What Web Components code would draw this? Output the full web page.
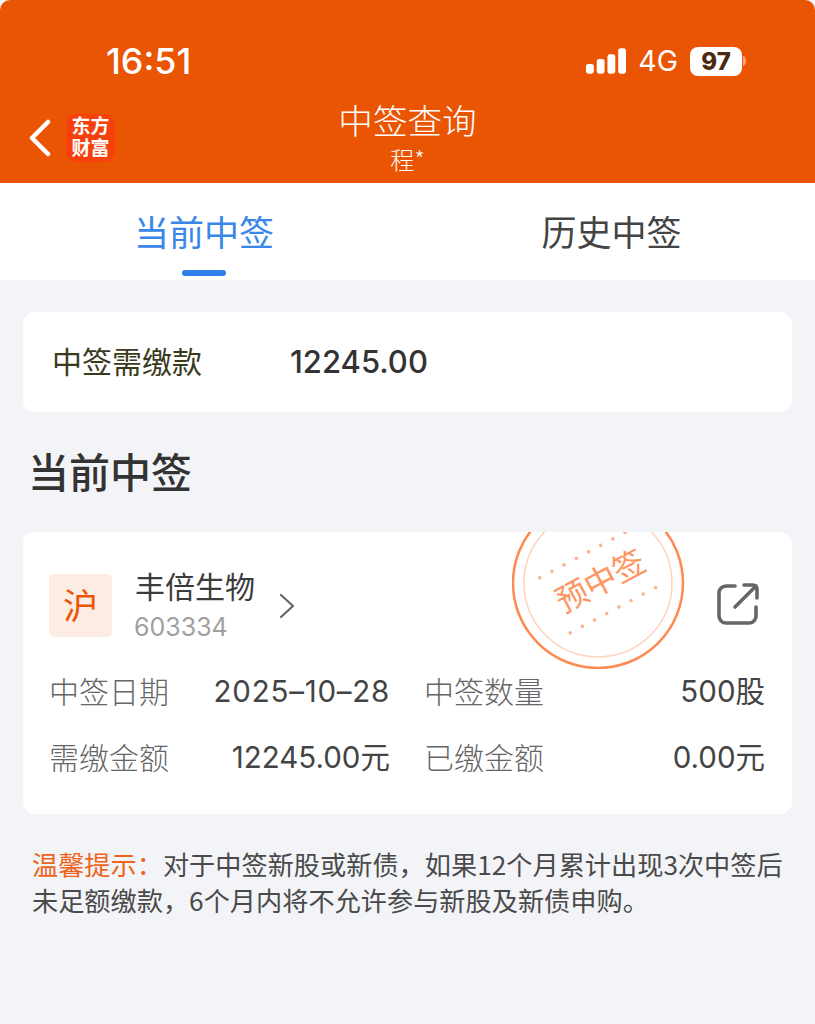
<!DOCTYPE html>
<html lang="zh"><head><meta charset="utf-8">
<style>
html,body{margin:0;padding:0;background:#f3f4f8;}
body{width:815px;height:1024px;overflow:hidden;font-family:"Noto Sans CJK SC","Liberation Sans",sans-serif;}
app-page{display:block;}
</style></head><body>
<app-page>
<app-header></app-header>
<app-tabs></app-tabs>
<div style="display:flex;flex-direction:column">
<pay-summary label="中签需缴款" value="12245.00"></pay-summary>
<section-title>当前中签</section-title>
<stock-card></stock-card>
<tip-note></tip-note>
</div>
</app-page>
<script>
const SANS='"Noto Sans CJK SC","Liberation Sans",sans-serif';
function def(name,html){customElements.define(name,class extends HTMLElement{constructor(){super();this.attachShadow({mode:'open'}).innerHTML=typeof html==='function'?html(this):html;}
connectedCallback(){if(typeof html==='function')this.shadowRoot.innerHTML=html(this);}});}
def('app-header',`<style>
:host{display:block;height:183px;background:#ea5504;color:#fff;position:relative;font-family:${SANS};box-sizing:border-box;border-radius:10px 10px 0 0;overflow:hidden;}
.wrap{display:flex;flex-direction:column;height:100%;background:#ea5504;}
.status{height:97px;display:flex;justify-content:space-between;align-items:flex-start;padding:41px 69px 0 106px;box-sizing:border-box;}
.time{font:500 35.8px/40px Inter,sans-serif;}
.right{display:flex;align-items:center;gap:12px;height:40px;}
.net{font:400 28.5px/30px Inter,sans-serif;}
.bat{display:flex;align-items:center;gap:1px}
.batb{width:52px;height:29px;background:#fff;border-radius:8px;font:800 24px/29px Inter,sans-serif;color:#4a2a10;text-align:center;}
.nav{position:relative;flex:1;display:flex;flex-direction:column;align-items:center;}
.t{font-size:34.6px;line-height:46px;font-weight:300;margin-top:-1px;}
.s{font-size:24px;line-height:30px;font-weight:300;margin-top:2px}
.back{position:absolute;left:29px;top:22px}
.logo{position:absolute;left:66px;top:17px;width:49px;height:48px;border-radius:11px;background:#f8400c;display:flex;align-items:center;justify-content:center;text-align:center;font-family:"Liberation Sans","Noto Sans CJK SC",sans-serif;font-size:19px;line-height:22.5px;font-weight:700;}
</style><div class="wrap"><div class="status"><span class="time">16:51</span>
<div class="right"><svg width="40" height="26" viewBox="0 0 41 26" fill="#fff"><rect x="0" y="16" width="8" height="10" rx="2.5"/><rect x="11" y="11" width="8" height="15" rx="2.5"/><rect x="22" y="6" width="8" height="20" rx="2.5"/><rect x="33" y="0" width="8" height="26" rx="2.5"/></svg>
<span class="net">4G</span><span class="bat"><span class="batb">97</span><svg width="3" height="10" viewBox="0 0 3 10"><path d="M0 0a3 5 0 0 1 0 10z" fill="#f5a67a"/></svg></span></div></div>
<div class="nav"><svg class="back" width="22" height="38" viewBox="0 0 22 38" fill="none" stroke="#fff" stroke-width="4.5" stroke-linecap="round" stroke-linejoin="round"><path d="M19 3 3 19l16 16" /></svg>
<div class="logo"><span>东方<br>财富</span></div>
<div class="t">中签查询</div><div class="s">程*</div></div></div>`);
def('app-tabs',`<style>
:host{display:block;height:97px;background:#fff;font-family:${SANS};}
.r{display:grid;grid-template-columns:408px 407px;height:100%;}
.tab{display:flex;flex-direction:column;align-items:center;font-size:35px;line-height:46px;padding-top:25px;box-sizing:border-box;color:#444;font-weight:400;}
.on{color:#3a87ea;}
.bar{width:44px;height:6px;border-radius:3px;background:#2f80e8;margin-top:16px}
</style><div class="r"><div class="tab on">当前中签<span class="bar"></span></div><div class="tab">历史中签</div></div>`);
def('pay-summary',el=>`<style>
:host{display:flex;align-items:center;margin:32px 23px 0 23px;height:100px;background:#fff;border-radius:12px;font-family:${SANS};padding-left:29px;box-sizing:border-box;}
.l{width:238px;font-size:30px;color:#3a3a1c;font-weight:400;margin-top:-4px;}
.v{font:500 31px/40px Inter,sans-serif;color:#333;}
</style><span class="l">${el.getAttribute('label')||''}</span><span class="v">${el.getAttribute('value')||''}</span>`);
def('section-title',`<style>
:host{display:block;margin:30px 0 0 28px;height:58px;font:500 41px/56px ${SANS};color:#333;}
</style><slot></slot>`);
def('info-cell',el=>`<style>
:host{display:flex;justify-content:space-between;align-items:center;height:66px;font-family:${SANS};}
.l{font-size:30px;color:#666;font-weight:300;margin-top:-2px;margin-left:-1px}
.v{font:400 29.5px/40px Inter,"Noto Sans CJK SC",sans-serif;color:#444;letter-spacing:${el.dataset.ls||0}px;}
</style><span class="l">${el.getAttribute('label')||''}</span><span class="v">${el.getAttribute('value')||''}</span>`);
const dot=(x,y)=>`<circle cx="${x}" cy="${y}" r="1.8"/>`;
let dots='';for(let i=0;i<8;i++){dots+=dot(37+i*13.8,19)+dot(38+i*13.8,82);}
def('stamp-mark',`<style>
:host{position:absolute;left:489px;top:0;width:174px;height:137px;overflow:hidden;display:block;}
svg{display:block}
text{font-family:${SANS};}
</style><svg width="174" height="137" viewBox="0 0 174 137"><g fill="none"><circle cx="86" cy="51" r="85" stroke="#ff8a50" stroke-width="2.5"/><circle cx="86" cy="51" r="74" stroke="#ffd2bb" stroke-width="1.5"/></g>
<g transform="rotate(-28 86 51)"><text x="89" y="62" text-anchor="middle" font-size="32" fill="#ff9562" font-weight="400">预中签</text>
<g fill="#ffb290">${dots}</g></g></svg>`);
def('stock-card',`<style>
:host{display:block;position:relative;margin:32px 23px 0 23px;height:282px;background:#fff;border-radius:12px;font-family:${SANS};overflow:hidden;box-sizing:border-box;}
.top{display:flex;align-items:flex-start;padding:42px 0 0 26px;height:116px;box-sizing:border-box;}
.tag{width:63px;height:63px;background:#fcece3;border-radius:5px;color:#ea5504;font-size:35px;line-height:59px;text-align:center;font-weight:400;}
.names{margin-left:23px;}
.n{font-size:30px;line-height:36px;color:#3c3c3c;margin-top:-7px;font-weight:400}
.c{font:400 25px/30px Inter,sans-serif;color:#a0a0a0;margin-top:9px;margin-left:-1px}
.chev{margin:19px 0 0 24px}
.share{position:absolute;left:694px;top:51px}
.grid{display:grid;grid-template-columns:340px 340px;column-gap:35px;padding:0 27px 0 27px;margin-top:10px;}
</style><stamp-mark></stamp-mark>
<div class="top"><div class="tag">沪</div><div class="names"><div class="n">丰倍生物</div><div class="c">603334</div></div>
<svg class="chev" width="16" height="26" viewBox="0 0 16 26" fill="none" stroke="#666" stroke-width="2.2" stroke-linecap="round" stroke-linejoin="round"><path d="M2 2l12 11L2 24"/></svg></div>
<svg class="share" width="42" height="42" viewBox="0 0 42 42" fill="none" stroke="#666" stroke-width="3.6" stroke-linecap="round" stroke-linejoin="round"><path d="M18 3H9a7 7 0 0 0-7 7v23a7 7 0 0 0 7 7h23a7 7 0 0 0 7-7v-9"/><path d="M18 24 39 3"/><path d="M27 2h9a4 4 0 0 1 4 4v9"/></svg>
<div class="grid"><info-cell data-ls="0.75" label="中签日期" value="2025–10–28"></info-cell><info-cell label="中签数量" value="500股"></info-cell><info-cell label="需缴金额" value="12245.00元"></info-cell><info-cell label="已缴金额" value="0.00元"></info-cell></div>`);
def('tip-note',`<style>
:host{display:block;margin:32px 30px 0 32px;font:400 26.2px/36px ${SANS};color:#4a4a4a;}
b{font-weight:400;color:#f0631a}
</style><b>温馨提示：</b>对于中签新股或新债，如果12个月累计出现3次中签后未足额缴款，6个月内将不允许参与新股及新债申购。`);
customElements.define('app-page',class extends HTMLElement{constructor(){super();this.attachShadow({mode:'open'}).innerHTML='<style>:host{display:block}</style><slot></slot>';}});
</script>
</body></html>
